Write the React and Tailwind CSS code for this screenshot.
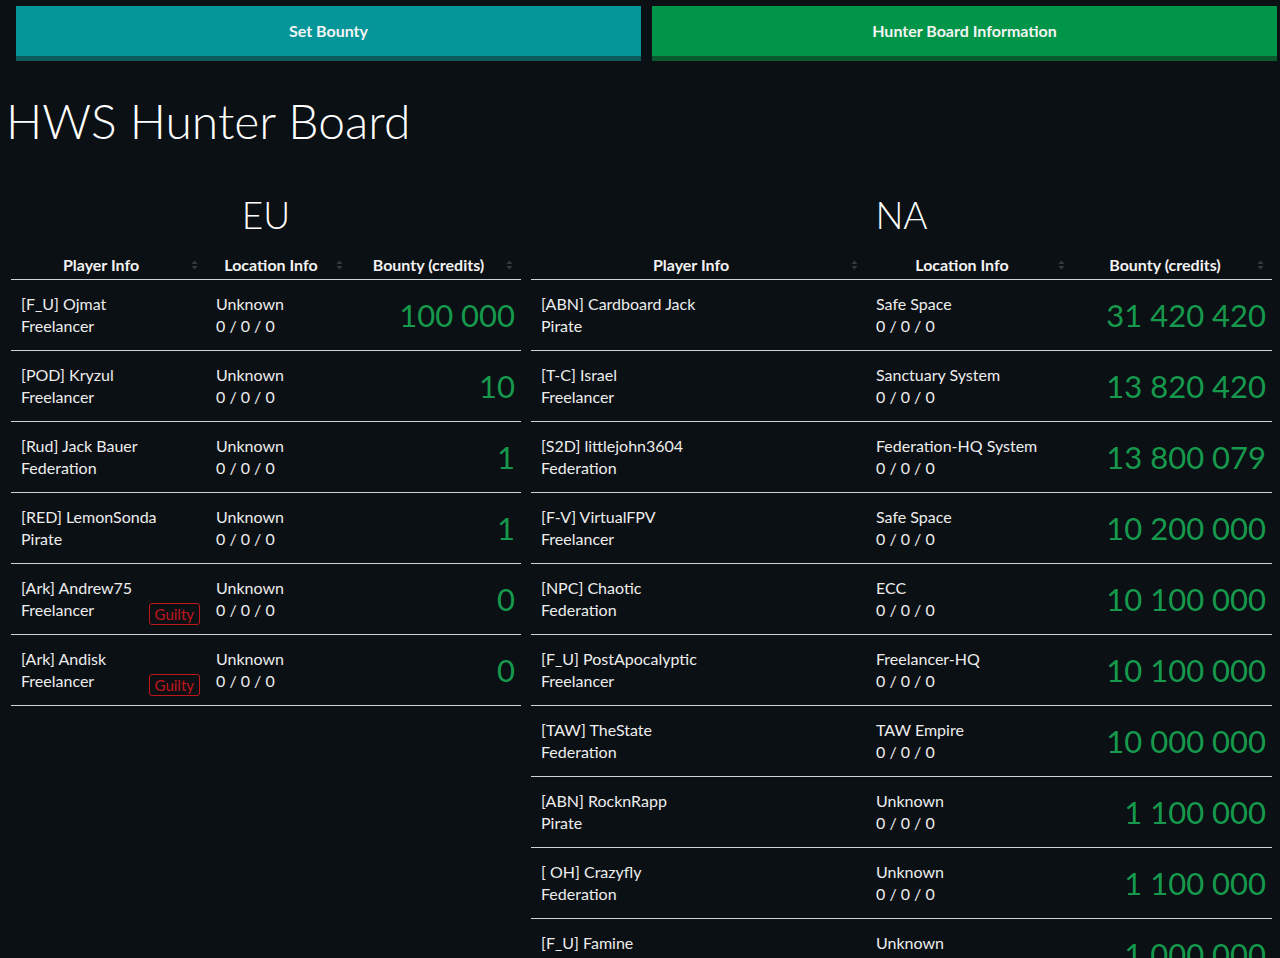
import React from "react";

const eu = [
  { name: "[F_U] Ojmat", fac: "Freelancer", loc: "Unknown", b: "100 000" },
  { name: "[POD] Kryzul", fac: "Freelancer", loc: "Unknown", b: "10" },
  { name: "[Rud] Jack Bauer", fac: "Federation", loc: "Unknown", b: "1" },
  { name: "[RED] LemonSonda", fac: "Pirate", loc: "Unknown", b: "1" },
  { name: "[Ark] Andrew75", fac: "Freelancer", loc: "Unknown", b: "0", guilty: true },
  { name: "[Ark] Andisk", fac: "Freelancer", loc: "Unknown", b: "0", guilty: true },
];

const na = [
  { name: "[ABN] Cardboard Jack", fac: "Pirate", loc: "Safe Space", b: "31 420 420" },
  { name: "[T-C] Israel", fac: "Freelancer", loc: "Sanctuary System", b: "13 820 420" },
  { name: "[S2D] littlejohn3604", fac: "Federation", loc: "Federation-HQ System", b: "13 800 079" },
  { name: "[F-V] VirtualFPV", fac: "Freelancer", loc: "Safe Space", b: "10 200 000" },
  { name: "[NPC] Chaotic", fac: "Federation", loc: "ECC", b: "10 100 000" },
  { name: "[F_U] PostApocalyptic", fac: "Freelancer", loc: "Freelancer-HQ", b: "10 100 000" },
  { name: "[TAW] TheState", fac: "Federation", loc: "TAW Empire", b: "10 000 000" },
  { name: "[ABN] RocknRapp", fac: "Pirate", loc: "Unknown", b: "1 100 000" },
  { name: "[ OH] Crazyfly", fac: "Federation", loc: "Unknown", b: "1 100 000" },
  { name: "[F_U] Famine", fac: "Freelancer", loc: "Unknown", b: "1 000 000" },
  { name: "[F_U] Hunger", fac: "Freelancer", loc: "Unknown", b: "1 000 000" },
];

function Sort() {
  return (
    <svg width="7" height="10" viewBox="0 0 7 10" className="shrink-0">
      <path d="M3.5 0.5 L6.5 4 L0.5 4 Z" fill="#34393e" />
      <path d="M3.5 9.5 L6.5 6 L0.5 6 Z" fill="#34393e" />
    </svg>
  );
}

function Th({ children }) {
  return (
    <div className="flex items-center h-[29px] pr-[8px]">
      <div className="flex-1 text-center font-bold text-[16px] text-[#f2f2f2]">{children}</div>
      <Sort />
    </div>
  );
}

function Table({ title, rows, cols }) {
  return (
    <div className="flex flex-col">
      <div className="h-[84px] flex items-end justify-center pb-[17px]">
        <span className="text-[37px] font-light text-white leading-none">{title}</span>
      </div>
      <div className={`grid ${cols} border-b border-[#cdd3d8]`}>
        <Th>Player Info</Th>
        <Th>Location Info</Th>
        <Th>Bounty (credits)</Th>
      </div>
      {rows.map((r, i) => (
        <div key={i} className={`grid ${cols} h-[71px] border-b border-[#cdd3d8]`}>
          <div className="flex items-center justify-between pl-[10px] pr-[6px]">
            <div className="flex flex-col text-[16px] leading-[22px] text-[#ededed]">
              <span>{r.name}</span>
              <span>{r.fac}</span>
            </div>
            {r.guilty && (
              <span className="self-end mb-[9px] border border-[#c0171b] rounded-[3px] text-[#c0171b] text-[15px] leading-[20px] px-[5px]">
                Guilty
              </span>
            )}
          </div>
          <div className="flex flex-col justify-center pl-[10px] text-[16px] leading-[22px] text-[#ededed]">
            <span>{r.loc}</span>
            <span>0 / 0 / 0</span>
          </div>
          <div className="flex items-center justify-end pr-[6px] text-[31px] text-[#16994c] leading-none">
            {r.b}
          </div>
        </div>
      ))}
    </div>
  );
}

export default function App() {
  return (
    <div className="h-[958px] bg-[#0b1014] font-['Lato','Open_Sans',sans-serif] overflow-hidden">
      <div className="flex pl-[16px] pr-[3px] pt-[6px] gap-[11px]">
        <div className="flex-1 h-[55px] bg-[#05969a] border-b-[5px] border-[#0b5b5a] flex items-center justify-center">
          <span className="text-[#f4f4f4] font-bold text-[16px]">Set Bounty</span>
        </div>
        <div className="flex-1 h-[55px] bg-[#009548] border-b-[5px] border-[#0a5a2f] flex items-center justify-center">
          <span className="text-[#f4f4f4] font-bold text-[16px]">Hunter Board Information</span>
        </div>
      </div>
      <h1 className="pl-[6px] mt-[32px] text-[48px] font-light text-white leading-[56px]">HWS Hunter Board</h1>
      <div className="flex pl-[11px] gap-[10px] mt-[17px]">
        <div className="w-[510px]">
          <Table title="EU" rows={eu} cols="grid-cols-[195px_145px_170px]" />
        </div>
        <div className="w-[741px]">
          <Table title="NA" rows={na} cols="grid-cols-[335px_207px_199px]" />
        </div>
      </div>
    </div>
  );
}
